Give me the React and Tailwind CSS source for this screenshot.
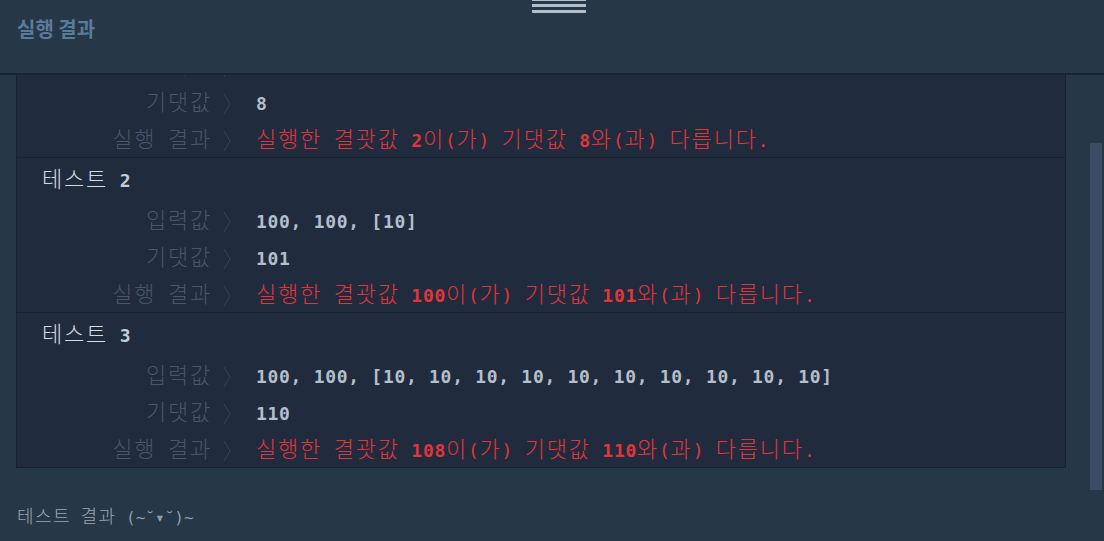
import React from 'react';

const HANGUL = /([\uAC00-\uD7A3]+)/;

// split a string into hangul runs and the rest, so each gets its own font size
const mix = (str, hCls, aCls) =>
    str.split(HANGUL).filter(Boolean).map((part, i) =>
        HANGUL.test(part)
            ? <span key={i} className={hCls}>{part}</span>
            : <span key={i} className={aCls}>{part}</span>
    );

const H_LABEL = "font-['Noto_Sans_CJK_KR',sans-serif] text-[22px] font-light tracking-[1.8px] text-[#475769]";
const A_LABEL = "text-[18px] tracking-[0.7px] text-[#475769]";
const H_RED = "font-['Noto_Sans_CJK_KR',sans-serif] text-[22px] font-light tracking-[1.8px] text-[#e0353b]";
const A_RED = "text-[18px] tracking-[0.7px] text-[#e0353b]";
const BOLD_RED = "text-[18px] font-bold tracking-[0.7px] text-[#e0353b]";

const Chevron = () => (
    <svg className="ml-[11px] inline-block h-[22px] w-[8px] align-[-5px]" viewBox="0 0 8 22" fill="none">
        <polyline points="1,1 7,11 1,21" stroke="#34435a" strokeWidth="1" />
    </svg>
);

const Row = ({ label, children }) => (
    <div className="flex h-[37px] items-center pt-[3px]">
        <div className="whitespace-pre">
            <span className="inline-block w-[195px] text-right">{mix(label, H_LABEL, A_LABEL)}</span>
            <Chevron />
            <span className="ml-[25px]">{children}</span>
        </div>
    </div>
);

const Value = ({ text }) => (
    <span className="text-[18px] font-bold tracking-[0.7px] text-[#b3bfcb]">{text}</span>
);

const Message = ({ got, want }) => (
    <>
        {mix('실행한 결괏값 ', H_RED, A_RED)}
        <span className={BOLD_RED}>{got}</span>
        {mix('이(가) 기댓값 ', H_RED, A_RED)}
        <span className={BOLD_RED}>{want}</span>
        {mix('와(과) 다릅니다.', H_RED, A_RED)}
    </>
);

const tests = [
    { n: 1, input: '2, 10, [7, 4, 5, 6]', expected: '8', got: '2' },
    { n: 2, input: '100, 100, [10]', expected: '101', got: '100' },
    { n: 3, input: '100, 100, [10, 10, 10, 10, 10, 10, 10, 10, 10, 10]', expected: '110', got: '108' },
];

const TestBlock = ({ t, first }) => (
    <div className={first ? 'pt-[6px] pb-[1px]' : 'border-t border-[#19222f] pt-[6px] pb-[1px]'}>
        <div className="flex h-[30px] items-center pl-[25px]">
            <div className="whitespace-pre">
                <span className="font-['Noto_Sans_CJK_KR',sans-serif] text-[22px] font-light tracking-[1.8px] text-[#d3dbe3]">테스트</span>
                <span className="text-[18px] font-bold tracking-[0.7px] text-[#c3cdd7]"> {t.n}</span>
            </div>
        </div>
        <div className="mt-[6px]">
            <Row label="입력값"><Value text={t.input} /></Row>
            <Row label="기댓값"><Value text={t.expected} /></Row>
            <Row label="실행 결과"><Message got={t.got} want={t.expected} /></Row>
        </div>
    </div>
);

const App = () => {
    return (
        <div className="flex h-[541px] w-[1104px] flex-col overflow-hidden bg-[#263747] font-['DejaVu_Sans_Mono','Noto_Sans_CJK_KR',monospace]">
            <header className="h-[75px] shrink-0 border-b-2 border-[#1b2432]">
                <div className="ml-[532px] w-[54px]">
                    <div className="h-[1px] bg-[#b2bec8]" />
                    <div className="mt-[3px] h-[3px] bg-[#b2bec8]" />
                    <div className="mt-[3px] h-[3px] rounded-b-[1px] bg-[#b2bec8]" />
                </div>
                <h1 className="mt-[4px] pl-[17px] font-['Noto_Sans_CJK_KR',sans-serif] text-[20px] leading-[24px] font-bold text-[#5a7b98]">
                    실행 결과
                </h1>
            </header>

            <div className="flex min-h-0 flex-1">
                <div className="min-w-0 flex-1 overflow-hidden pr-[24px] pl-[16px]">
                    <div className="-mt-[73px] border border-[#18212e] bg-[#202b3d] leading-[24px]">
                        {tests.map((t, i) => <TestBlock key={t.n} t={t} first={i === 0} />)}
                    </div>
                    <div className="mt-[35px] pl-[1px] leading-[24px] whitespace-pre">
                        {mix('테스트 결과 ', "font-['Noto_Sans_CJK_KR',sans-serif] text-[18px] font-light tracking-[1.4px] text-[#9aa6b3]", 'text-[16px] text-[#9aa6b3]')}
                        <span className="text-[16px] text-[#8e9cab]">(~˘▾˘)~</span>
                    </div>
                </div>
                <div className="w-[12px] shrink-0">
                    <div className="mt-[68px] h-[347px] bg-[#3a4c63]" />
                </div>
                <div className="w-[2px] shrink-0" />
            </div>
        </div>
    );
};

export default App;
